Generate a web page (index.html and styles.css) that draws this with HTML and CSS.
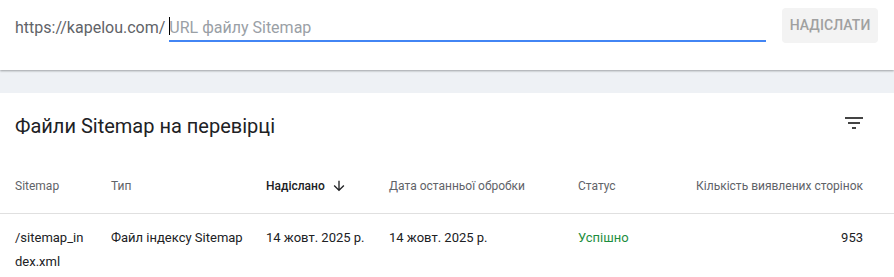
FILE: index.html
```html
<!DOCTYPE html>
<html lang="uk">
<head>
<meta charset="utf-8">
<title>Sitemaps</title>
<link rel="stylesheet" href="styles.css">
</head>
<body>
<div class="submit-bar">
  <span class="prefix">https://kapelou.com/</span>
  <div class="field">
    <input class="url-input" type="text" placeholder="URL файлу Sitemap">
  </div>
  <button class="submit-btn" type="button">Надіслати</button>
</div>
<div class="gap"></div>
<section class="card">
  <div class="card-head">
    <h2 class="card-title">Файли Sitemap на перевірці</h2>
    <svg class="filter-icon" width="24" height="24" viewBox="0 0 24 24"><path d="M10 18h4v-2h-4v2zM3 6v2h18V6H3zm3 7h12v-2H6v2z" fill="#444"/></svg>
  </div>
  <div class="grid">
    <div class="th">Sitemap</div>
    <div class="th">Тип</div>
    <div class="th th-active">Надіслано <svg class="sort-icon" width="16" height="16" viewBox="0 0 24 24"><path d="M20 12l-1.41-1.41L13 16.17V4h-2v12.17l-5.58-5.59L4 12l8 8 8-8z" fill="#202124"/></svg></div>
    <div class="th">Дата останньої обробки</div>
    <div class="th">Статус</div>
    <div class="th num">Кількість виявлених сторінок</div>

    <div class="td td-path">/sitemap_index.xml</div>
    <div class="td">Файл індексу Sitemap</div>
    <div class="td">14 жовт. 2025 р.</div>
    <div class="td">14 жовт. 2025 р.</div>
    <div class="td ok">Успішно</div>
    <div class="td num">953</div>
  </div>
</section>
</body>
</html>
```

FILE: styles.css
```css
* { box-sizing: border-box; }
html, body { margin: 0; padding: 0; background: #fff; }
body {
  font-family: Roboto, "Noto Sans", Arial, sans-serif;
  color: #202124;
  width: 894px;
  height: 277px;
  overflow: hidden;
}

.submit-bar {
  position: relative;
  z-index: 1;
  height: 70px;
  display: flex;
  align-items: flex-start;
  padding: 0 16px 0 15px;
  background: #fff;
  box-shadow: 0 1px 2px rgba(60, 64, 67, 0.45);
}
.prefix {
  font-size: 16px;
  line-height: 20px;
  margin-top: 18px;
  color: #5f6368;
  margin-right: 4px;
  white-space: nowrap;
}
.field {
  position: relative;
  width: 598px;
  margin-top: 16px;
  border-bottom: 2px solid #4285f4;
  height: 26px;
}
.field::before {
  content: "";
  position: absolute;
  left: 0;
  top: 1px;
  width: 1px;
  height: 18px;
  background: #000;
}
.url-input {
  border: 0;
  outline: 0;
  padding: 0;
  width: 100%;
  height: 22px;
  font: 16px/20px Roboto, "Noto Sans", Arial, sans-serif;
  color: #202124;
  background: transparent;
}
.url-input::placeholder { color: #9aa0a6; }
.submit-btn {
  margin-left: 16px;
  margin-top: 8px;
  width: 96px;
  height: 35px;
  border: 0;
  border-radius: 4px;
  background: #f3f3f3;
  color: #a0a0a0;
  font: 500 14px/35px Roboto, Arial, sans-serif;
  text-transform: uppercase;
  letter-spacing: 0.1px;
  padding: 0;
}

.gap {
  height: 23px;
  background: #eef1f5;
}

.card { background: #fff; }
.card-head {
  height: 65px;
  display: flex;
  justify-content: space-between;
  align-items: flex-start;
  padding: 19px 28px 0 15px;
}
.card-title {
  margin: 0;
  font-size: 20px;
  line-height: 28px;
  font-weight: 400;
  color: #202124;
}
.filter-icon { margin-top: -1px; }

.grid {
  display: grid;
  grid-template-columns: 96px 155px 123px 189px 1fr auto;
  padding: 0 31px 0 15px;
}
.th {
  height: 56px;
  border-bottom: 1px solid #e0e0e0;
  display: flex;
  align-items: center;
  font-size: 12px;
  color: #5f6368;
}
.th-active { color: #202124; font-weight: 500; }
.sort-icon { margin-left: 6px; }
.num { justify-content: flex-end; text-align: right; }
.grid > .th:first-child { margin-left: -15px; padding-left: 15px; }
.grid > .th.num { margin-right: -31px; padding-right: 31px; }
.td {
  padding: 12px 16px 12px 0;
  font-size: 13px;
  line-height: 24px;
  color: #202124;
}
.td.num { padding-right: 0; }
.td-path { word-break: break-all; padding-right: 27px; }
.ok { color: #1e8e3e; }
```
